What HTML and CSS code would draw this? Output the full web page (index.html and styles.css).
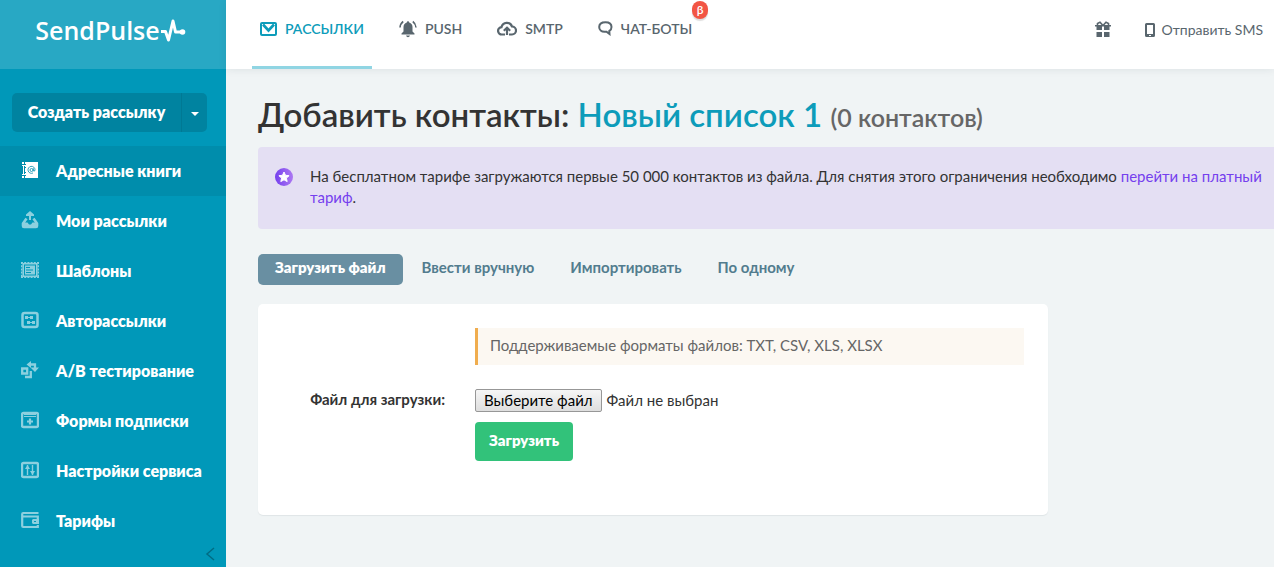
FILE: index.html
```html
<!DOCTYPE html>
<html lang="ru">
<head>
<meta charset="utf-8">
<meta name="viewport" content="width=device-width, initial-scale=1">
<title>SendPulse — Добавить контакты</title>
<link rel="stylesheet" href="styles.css">
</head>
<body>
<div class="app">
  <aside class="sidebar">
    <a class="logo" href="#">
      <span>SendPulse</span>
      <svg width="26" height="24" viewBox="0 0 26 24" fill="none" stroke="currentColor" stroke-width="3" stroke-linejoin="round"><path d="M1 13.500h4.500L8.500 22 13 3l2.500 11H22"/><circle cx="22.500" cy="14" r="2.800" fill="currentColor" stroke="none"/></svg>
    </a>
    <div class="create">
      <button class="create-main" type="button">Создать рассылку</button>
      <button class="create-more" type="button" aria-label="Другие варианты"><svg width="8" height="4" viewBox="0 0 8 4" fill="currentColor"><path d="M0 0h8L4 4z"/></svg></button>
    </div>
    <nav class="menu">
      <a class="menu-item active" href="#"><svg width="18" height="18" viewBox="0 0 18 18"><path fill="currentColor" d="M4 1h13v16H4zM1 1h2v2H1zM1 15h2v2H1zM2 5h1v8H2zM1 4h3v1H1zM1 13h3v1H1z"/><path stroke="#008dac" fill="none" d="M3 3.500h2M3 6.500h2M3 11.500h2M3 14.500h2"/><g fill="none" stroke="#008dac" stroke-width=".8"><circle cx="10.500" cy="9" r="1.500"/><path d="M12.300 7.200v2.600q1.700 1 1.700-1A3.500 3.500 0 1 0 12 12"/></g></svg>Адресные книги</a>
      <a class="menu-item" href="#"><svg width="18" height="18" viewBox="0 0 18 18"><path fill="none" stroke="currentColor" stroke-width="2.600" stroke-linejoin="round" d="M5.500 7.500 2 12.500V15q0 1 1 1h12q1 0 1-1v-2.500l-3.500-5"/><path fill="currentColor" d="M9 0 5 3.500V5h3v4h2V5h3V3.500zM2.500 11.500h4L8 13.500h2l1.500-2h4V16h-13z"/></svg>Мои рассылки</a>
      <a class="menu-item" href="#"><svg width="18" height="18" viewBox="0 0 18 18"><path fill="none" stroke="currentColor" stroke-width="1.400" stroke-dasharray="2 1.200" d="M0 1.700h18M0 16.300h18M.7 1v16M17.300 1v16"/><path fill="currentColor" fill-rule="evenodd" d="M1.400 2h15.200v14H1.400zM3 3.500v11h12v-11z"/><path fill="currentColor" fill-rule="evenodd" d="M4 4.500h10v9H4zM5 6v1h4V6zM5 8.500v1h7v-1zM5 11v1h5v-1z"/></svg>Шаблоны</a>
      <a class="menu-item" href="#"><svg width="18" height="18" viewBox="0 0 18 18"><rect x="1.500" y="2" width="15" height="14" rx="2" fill="none" stroke="currentColor" stroke-width="2.500"/><path stroke="currentColor" d="M5 6.500h6M7 11.500h6"/><path fill="currentColor" d="M4 5h3v3H4zM9 5h3v3H9zM6 10h3v3H6zM11 10h3v3h-3z"/></svg>Авторассылки</a>
      <a class="menu-item" href="#"><svg width="18" height="18" viewBox="0 0 18 18"><g fill="none" stroke="currentColor" stroke-width="2.300"><path d="M1.200 7.500h5v5h-5zM9.800 10v6H4M9 3.500h5v4"/></g><path fill="currentColor" d="M5.500 3.500 10 0v7zM9.500 6.500H18L14 11z"/></svg>A/B тестирование</a>
      <a class="menu-item" href="#"><svg width="18" height="18" viewBox="0 0 18 18"><rect x="1" y="2" width="16" height="14" rx="1.500" fill="none" stroke="currentColor" stroke-width="2.400"/><path fill="none" stroke="currentColor" d="M3 3.500h12M3 5.500h12"/><path fill="none" stroke="currentColor" stroke-width="2.200" d="M9 7.500v6M6 10.500h6"/></svg>Формы подписки</a>
      <a class="menu-item" href="#"><svg width="18" height="18" viewBox="0 0 18 18"><rect x="1" y="2" width="16" height="14" rx="1.500" fill="none" stroke="currentColor" stroke-width="2.400"/><path fill="none" stroke="currentColor" stroke-width="1.400" d="M6.500 4v10M11.500 4v10"/><path fill="currentColor" d="m4 8 2.500-4L9 8zM9 10l2.500 4 2.500-4z"/></svg>Настройки сервиса</a>
      <a class="menu-item" href="#"><svg width="18" height="18" viewBox="0 0 18 18"><path fill="none" stroke="currentColor" stroke-width="2.200" d="M17.500 2H2.200q-1 0-1 1v12q0 1 1 1h14.600v-2M1 5.500h15.800V8"/><path fill="currentColor" fill-rule="evenodd" d="M12 8h6v5h-6l-1-1V9zM13 10v1h2v-1z"/></svg>Тарифы</a>
    </nav>
    <button class="collapse" type="button" aria-label="Свернуть меню"><svg width="10" height="14" viewBox="0 0 10 14" fill="none" stroke="currentColor" stroke-width="1.500"><path d="M9 1 2 7l7 6"/></svg></button>
  </aside>
  <div class="page">
    <header class="topbar">
      <nav class="services">
        <a class="service current" href="#"><svg width="17" height="14" viewBox="0 0 17 14"><rect x="1" y="1" width="15" height="12" rx="1" fill="none" stroke="currentColor" stroke-width="2"/><path d="m3 2.500 5.500 6 5.500-6" fill="none" stroke="currentColor" stroke-width="2.600"/></svg>РАССЫЛКИ</a>
        <a class="service" href="#"><svg width="18" height="18" viewBox="0 0 18 18"><path fill="currentColor" d="M9 1.200q1.200 0 1.200 1.300 3.300 1 3.300 4.500v4.500l2 2v1h-13v-1l2-2V7q0-3.500 3.300-4.500 0-1.300 1.200-1.300zM7 15.500h4q-.5 1.800-2 1.800t-2-1.800z"/><path fill="none" stroke="currentColor" stroke-width="1.600" d="M4.200 1.500Q1.400 3.500 1 7.500M13.800 1.500q2.800 2 3.200 6"/></svg>PUSH</a>
        <a class="service" href="#"><svg width="20" height="15" viewBox="0 0 20 15" fill="none" stroke="currentColor" stroke-width="2.200"><path d="M8 13.500H5a3.700 3.700 0 0 1-.5-7.400A5.500 5.500 0 0 1 15 5.500a4 4 0 0 1 0 8h-3"/><path d="M10 14V7.500M6.800 9.800 10 6.800l3.200 3"/></svg>SMTP</a>
        <a class="service" href="#"><svg width="15" height="15" viewBox="0 0 15 15"><path fill="none" stroke="currentColor" stroke-width="2" d="M7.500 1.200C3.600 1.200 1.200 3 1.200 6s2.300 4.800 5.300 4.800h2l3 2.200-.2-3q2.200-1.200 2.200-4c0-3-2.400-4.800-6-4.800z"/></svg>ЧАТ-БОТЫ<span class="beta">β</span></a>
      </nav>
      <div class="tools">
        <a href="#" aria-label="Подарки"><svg width="16" height="17" viewBox="0 0 16 17"><path fill="currentColor" d="M1.500 5H7v4H1.500zM9 5h5.500v4H9zM1.500 11H7v5H1.500zM9 11h5.500v5H9zM0 4h16v1.500H0z"/><path fill="none" stroke="currentColor" stroke-width="1.600" d="M8 4.500 5 1.200 2.500 2.500v2M8 4.500l3-3.300 2.500 1.300v2"/></svg></a>
        <a class="sms" href="#"><svg width="10" height="14" viewBox="0 0 10 14"><path fill="currentColor" fill-rule="evenodd" d="M1.500 0h7Q10 0 10 1.500v11q0 1.500-1.500 1.500h-7Q0 14 0 12.500v-11Q0 0 1.500 0zM2 2v9h6V2zM4 12v1h2v-1z"/></svg>Отправить SMS</a>
      </div>
    </header>
    <main class="content">
      <h1 class="title">Добавить контакты: <a href="#">Новый список 1</a> <small>(0 контактов)</small></h1>
      <div class="notice">
        <svg width="18" height="18" viewBox="0 0 18 18"><defs><linearGradient id="violet"><stop stop-color="#7540ee"/><stop offset="1" stop-color="#ac78f2"/></linearGradient></defs><circle cx="9" cy="9" r="9" fill="url(#violet)"/><path fill="#fff" stroke="#fff" stroke-linejoin="round" d="m9 4 1.500 3.300 3.600.4-2.700 2.400.8 3.500L9 11.800l-3.200 1.800.8-3.500-2.700-2.400 3.600-.4z"/></svg>
        <p>На бесплатном тарифе загружаются первые 50 000 контактов из файла. Для снятия этого ограничения необходимо <a href="#">перейти на платный тариф</a>.</p>
      </div>
      <nav class="tabs">
        <a class="tab selected" href="#">Загрузить файл</a>
        <a class="tab" href="#">Ввести вручную</a>
        <a class="tab" href="#">Импортировать</a>
        <a class="tab" href="#">По одному</a>
      </nav>
      <form class="card">
        <p class="hint">Поддерживаемые форматы файлов: TXT, CSV, XLS, XLSX</p>
        <label class="caption" for="file">Файл для загрузки:</label>
        <div class="picker">
          <input class="picker-input" id="file" type="file" accept=".txt,.csv,.xls,.xlsx">
          <label class="picker-button" for="file">Выберите файл</label>
          <span>Файл не выбран</span>
        </div>
        <button class="submit" type="submit">Загрузить</button>
      </form>
    </main>
  </div>
</div>
</body>
</html>
```
FILE: styles.css
```css
* { box-sizing: border-box; }

body {
  margin: 0;
  background: #f0f4f5;
  color: #333;
  font: 15px/21px Lato, "Noto Sans", sans-serif;
}

a { color: inherit; text-decoration: none; }
button { border: 0; font: inherit; color: inherit; cursor: pointer; }
svg { display: block; flex: none; }
p { margin: 0; }

.app { display: flex; min-height: 100vh; }

.sidebar {
  display: flex;
  flex-direction: column;
  flex: none;
  width: 226px;
  background: #0098b9;
  color: #fff;
}

.logo {
  display: flex;
  align-items: center;
  justify-content: center;
  height: 69px;
  padding: 0 5px 10px 0;
  background: #28a8c4;
  font: 600 25px/32px "Open Sans", sans-serif;
}

.create {
  display: flex;
  margin: 24px 19px 14px 12px;
  border-radius: 5px;
  overflow: hidden;
  background: #0083a0;
  font-size: 16px;
  font-weight: 800;
}
.create button { background: none; }
.create-main { flex: 1; height: 39px; padding: 0 0 2px; }
.create .create-more {
  display: flex;
  align-items: center;
  justify-content: center;
  width: 26px;
  padding: 2px 0 0;
  border-left: 1px solid #007994;
}

.menu-item {
  display: flex;
  align-items: center;
  gap: 17px;
  height: 50px;
  padding: 0 0 2px 21px;
  font-size: 16px;
  font-weight: 800;
  white-space: nowrap;
}
.menu-item svg { opacity: .55; }
.menu-item.active { background: #008dac; }
.menu-item.active svg { opacity: 1; }

.collapse {
  align-self: flex-end;
  margin-top: auto;
  padding: 0 11px 6px;
  background: none;
  color: #006c84;
}

.page { flex: 1; min-width: 0; }

.topbar {
  display: flex;
  justify-content: space-between;
  height: 69px;
  padding: 0 11px 0 26px;
  background: #fff;
  box-shadow: 0 1px 8px rgba(0, 40, 50, .08);
  color: #59666e;
  font-size: 14px;
}
.services { display: flex; gap: 19px; }
.service {
  position: relative;
  display: flex;
  align-items: center;
  gap: 8px;
  padding: 0 8px 9px;
  border-bottom: 3px solid transparent;
  font-weight: 600;
}
.service.current { border-color: #90d5e3; color: #0d9cba; }
.beta {
  position: absolute;
  top: 1px;
  right: -8px;
  width: 16px;
  height: 18px;
  border-radius: 8px;
  background: #f25544;
  box-shadow: 0 2px 1px #ddd;
  color: #fff;
  font-size: 12px;
  line-height: 18px;
  text-align: center;
}
.tools {
  display: flex;
  align-items: center;
  gap: 34px;
  padding-bottom: 10px;
}
.sms { display: flex; align-items: center; gap: 6px; }

.content { padding: 24px 0 24px 32px; }

.title {
  margin: 0 0 11px;
  font-size: 33px;
  font-weight: 600;
  line-height: 43px;
}
.title a { color: #0d9cba; }
.title small { color: #666; font-size: 25px; line-height: 30px; }

.notice {
  display: flex;
  gap: 17px;
  padding: 19px 10px 21px 17px;
  border-radius: 4px 0 0 4px;
  background: #e4dff3;
}
.notice svg { margin-top: 2px; }
.notice a { color: #7540ee; }

.tabs { display: flex; gap: 2px; margin: 25px 0 19px; }
.tab {
  padding: 3px 17px 7px;
  border-radius: 5px;
  color: #527c8e;
  font-weight: 700;
}
.tab.selected { background: #698fa2; color: #fff; font-weight: 800; }

.card {
  display: grid;
  grid-template-columns: 187px 1fr;
  column-gap: 30px;
  align-items: start;
  max-width: 790px;
  padding: 24px 24px 54px 0;
  border-radius: 5px;
  background: #fff;
  box-shadow: 0 1px 1px #dfe5e7;
}
.hint {
  grid-column: 2;
  margin-bottom: 24px;
  padding: 7px 12px 9px;
  border-left: 3px solid #f0ad4e;
  background: #fcf8f2;
  color: #666;
}
.caption { font-weight: 700; text-align: right; }
.picker { display: flex; align-items: center; gap: 5px; margin-bottom: 10px; }
.picker-input { position: absolute; width: 1px; height: 1px; opacity: 0; }
.picker-button {
  padding: 0 8px;
  border: 1px solid #979797;
  border-radius: 2px;
  background: linear-gradient(#f6f6f6, #dedede);
  color: #000;
}
.submit {
  grid-column: 2;
  justify-self: start;
  height: 39px;
  padding: 0 14px 2px;
  border-radius: 4px;
  background: #32c27a;
  color: #fff;
  font-weight: 800;
}
```
